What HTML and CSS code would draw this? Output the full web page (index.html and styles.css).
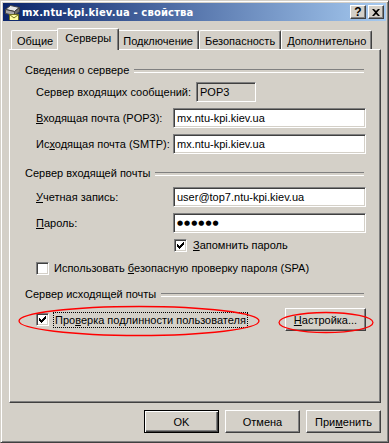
FILE: index.html
```html
<!DOCTYPE html>
<html lang="ru">
<head>
  <meta charset="UTF-8">
  <title>mx.ntu-kpi.kiev.ua - свойства</title>
  <link rel="stylesheet" href="styles.css">
</head>
<body>
  <div class="window">
    <div class="titlebar">
      <svg class="app-icon" width="16" height="16" viewBox="0 0 16 16">
        <polygon points="1.5,5.5 6.5,1.5 15.5,3.5 10.5,7.5" fill="#e4e4e4" stroke="#404040"/>
        <polygon points="1.5,5.5 10.5,7.5 10.5,11.5 1.5,9.5" fill="#a8a8a8" stroke="#404040"/>
        <polygon points="10.5,7.5 15.5,3.5 15.5,7.5 10.5,11.5" fill="#707070" stroke="#404040"/>
        <rect x="5.5" y="10.5" width="9" height="6" fill="#ffffa0" stroke="#707020"/>
        <path d="M5.5 10.5 L10 14 L14.5 10.5" fill="none" stroke="#707020"/>
      </svg>
      <span class="title">mx.ntu-kpi.kiev.ua - свойства</span>
      <div class="caption-btns">
        <span class="cbtn help">?</span>
        <span class="cbtn">
          <svg width="8" height="7" viewBox="0 0 8 7">
            <path d="M0 0h2l2 2 2-2h2L5 3.5 8 7H6L4 5 2 7H0l3-3.5z" fill="#000"/>
          </svg>
        </span>
      </div>
    </div>

    <div class="client">
      <div class="tabs">
        <div class="tab">Общие</div>
        <div class="tab active">Серверы</div>
        <div class="tab">Подключение</div>
        <div class="tab">Безопасность</div>
        <div class="tab">Дополнительно</div>
      </div>

      <div class="panel">
        <div class="group">
          <div class="group-head"><span>Сведения о сервере</span></div>
          <div class="row first">
            <span class="label">Сервер вхо<u>д</u>ящих сообщений:</span>
            <div class="edit readonly">POP3</div>
          </div>
          <div class="row">
            <span class="label"><u>В</u>ходящая почта (POP3):</span>
            <div class="edit">mx.ntu-kpi.kiev.ua</div>
          </div>
          <div class="row">
            <span class="label">Ис<u>х</u>одящая почта (SMTP):</span>
            <div class="edit">mx.ntu-kpi.kiev.ua</div>
          </div>
        </div>

        <div class="group">
          <div class="group-head"><span>Сервер входящей почты</span></div>
          <div class="row first">
            <span class="label"><u>У</u>четная запись:</span>
            <div class="edit">user@top7.ntu-kpi.kiev.ua</div>
          </div>
          <div class="row">
            <span class="label"><u>П</u>ароль:</span>
            <div class="edit password">●●●●●●</div>
          </div>
          <div class="check-row remember">
            <span class="checkbox checked">
              <svg width="9" height="9" viewBox="0 0 9 9"><polygon points="1,3 3,5 7,1 8,1 8,3 3,8 1,6" fill="#000" shape-rendering="crispEdges"/></svg>
            </span>
            <span><u>З</u>апомнить пароль</span>
          </div>
          <div class="check-row spa">
            <span class="checkbox"></span>
            <span>Использовать <u>б</u>езопасную проверку пароля (SPA)</span>
          </div>
        </div>

        <div class="group">
          <div class="group-head"><span>Сервер исходящей почты</span></div>
          <div class="auth-row">
            <span class="checkbox checked">
              <svg width="9" height="9" viewBox="0 0 9 9"><polygon points="1,3 3,5 7,1 8,1 8,3 3,8 1,6" fill="#000" shape-rendering="crispEdges"/></svg>
            </span>
            <span class="focus">Про<u>в</u>ерка подлинности пользователя</span>
            <span class="button settings"><u>Н</u>астройка...</span>
          </div>
        </div>
      </div>

      <div class="buttons">
        <span class="button default">OK</span>
        <span class="button">Отмена</span>
        <span class="button">При<u>м</u>енить</span>
      </div>
    </div>

    <!-- hand-drawn marks over the screenshot -->
    <svg class="marks" width="389" height="443" viewBox="0 0 389 443">
      <ellipse cx="139" cy="321" rx="120" ry="14.5" fill="none" stroke="#ff0000" stroke-width="1.3"/>
      <ellipse cx="326" cy="322.5" rx="47" ry="10" fill="none" stroke="#ff0000" stroke-width="1.3"/>
    </svg>
  </div>
</body>
</html>
```

FILE: styles.css
```css
* {
  box-sizing: border-box;
}

body {
  margin: 0;
  background: #d4d0c8;
  font-family: "Liberation Sans", Arial, sans-serif;
  font-size: 11px;
  color: #000;
}

u {
  text-underline-offset: 1px;
}

.window {
  position: relative;
  width: 389px;
  height: 443px;
  background: #d4d0c8;
  border: 1px solid;
  border-color: #d4d0c8 #404040 #404040 #d4d0c8;
  box-shadow: inset 1px 1px #fff, inset -1px -1px #808080;
  padding: 2px;
  display: flex;
  flex-direction: column;
}

/* title bar */
.titlebar {
  height: 18px;
  display: flex;
  align-items: center;
  padding: 0 2px 0 1px;
  background: linear-gradient(to right, #0a246a, #a6caf0);
  color: #fff;
}

.app-icon {
  flex: none;
}

.title {
  margin-left: 2px;
  font-family: "DejaVu Sans", sans-serif;
  font-weight: bold;
  font-size: 10px;
  letter-spacing: 0.15px;
  white-space: nowrap;
}

.caption-btns {
  margin-left: auto;
  display: flex;
  gap: 2px;
}

.cbtn {
  width: 16px;
  height: 14px;
  display: flex;
  align-items: center;
  justify-content: center;
  background: #d4d0c8;
  color: #000;
  border: 1px solid;
  border-color: #fff #404040 #404040 #fff;
  box-shadow: inset -1px -1px #808080;
}

.cbtn.help {
  font-weight: bold;
  font-size: 12px;
  line-height: 12px;
  padding-bottom: 1px;
}

/* client area */
.client {
  flex: 1;
  display: flex;
  flex-direction: column;
  padding: 7px 5px 7px 6px;
}

.tabs {
  display: flex;
  align-items: flex-end;
  height: 21px;
  padding-left: 2px;
}

.tab {
  height: 19px;
  padding: 4px 5px 0;
  line-height: 13px;
  white-space: nowrap;
  border: 1px solid;
  border-color: #fff #404040 transparent #fff;
  border-bottom: none;
  border-radius: 2px 2px 0 0;
  box-shadow: inset -1px 0 #808080;
  background: #d4d0c8;
}

.tab.active {
  position: relative;
  z-index: 1;
  height: 22px;
  margin: 0 -2px -1px;
  padding: 3px 7px 0;
}

.panel {
  flex: 1;
  border: 1px solid;
  border-color: #fff #404040 #404040 #fff;
  box-shadow: inset -1px -1px #808080;
  padding: 14px 14px 0 15px;
}

.group + .group {
  margin-top: 13px;
}

.group-head {
  display: flex;
  align-items: center;
  height: 13px;
  line-height: 13px;
}

.group-head::after {
  content: "";
  flex: 1;
  height: 2px;
  margin: 0 2px 0 5px;
  border-top: 1px solid #808080;
  border-bottom: 1px solid #fff;
}

.row {
  display: flex;
  align-items: center;
  height: 20px;
  margin-top: 6px;
  padding-left: 11px;
}

.row.first {
  margin-top: 5px;
}

.group + .group .row.first {
  margin-top: 7px;
}

.label {
  width: 137px;
  flex: none;
  white-space: nowrap;
}

.edit {
  flex: 1;
  height: 20px;
  line-height: 16px;
  background: #fff;
  border: 1px solid;
  border-color: #808080 #fff #fff #808080;
  box-shadow: inset 1px 1px #404040, inset -1px -1px #d4d0c8;
  padding: 1px 0 0 3px;
  white-space: nowrap;
}

.edit.readonly {
  flex: none;
  width: 60px;
  margin-left: 23px;
  background: #d4d0c8;
}

.edit.password {
  font-family: "DejaVu Sans", sans-serif;
  font-size: 7px;
  letter-spacing: 1px;
}

.check-row {
  display: flex;
  align-items: center;
  gap: 6px;
  height: 13px;
  line-height: 13px;
  white-space: nowrap;
}

.check-row.remember {
  margin-top: 6px;
  padding-left: 149px;
}

.check-row.spa {
  margin-top: 10px;
  padding-left: 11px;
  gap: 5px;
}

.checkbox {
  width: 13px;
  height: 13px;
  flex: none;
  display: flex;
  align-items: center;
  justify-content: center;
  background: #fff;
  border: 1px solid;
  border-color: #808080 #fff #fff #808080;
  box-shadow: inset 1px 1px #404040, inset -1px -1px #d4d0c8;
}

.auth-row {
  display: flex;
  align-items: center;
  height: 23px;
  margin-top: 7px;
  padding-left: 11px;
}

.focus {
  margin-left: 4px;
  height: 16px;
  line-height: 14px;
  padding: 0 1px;
  border: 1px dotted #000;
  white-space: nowrap;
}

.button {
  width: 75px;
  height: 23px;
  display: flex;
  align-items: center;
  justify-content: center;
  background: #d4d0c8;
  border: 1px solid;
  border-color: #fff #404040 #404040 #fff;
  box-shadow: inset -1px -1px #808080;
  white-space: nowrap;
}

.button.settings {
  width: 81px;
  margin-left: auto;
}

.button.default {
  border-color: #000;
  box-shadow: inset 1px 1px #fff, inset -1px -1px #404040, inset -2px -2px #808080;
}

.buttons {
  display: flex;
  justify-content: flex-end;
  gap: 6px;
  margin-top: 7px;
}

.marks {
  position: absolute;
  left: -1px;
  top: -1px;
  pointer-events: none;
}
```
